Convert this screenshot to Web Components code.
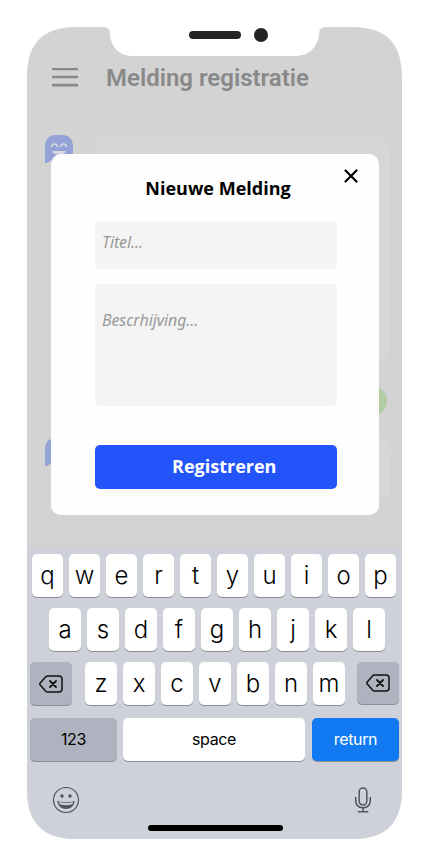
<!DOCTYPE html>
<html lang="nl">
<head>
<meta charset="utf-8">
<title>Melding registratie</title>
<style>
html,body{margin:0;background:#fff}
body{width:431px;height:864px;overflow:hidden;font-family:"Open Sans",sans-serif}
</style>
</head>
<body>
<phone-frame>
  <app-header>Melding registratie</app-header>
  <message-feed></message-feed>
  <melding-dialog slot="overlay" heading="Nieuwe Melding">
    <text-field>Titel...</text-field>
    <text-field multiline>Bescrhijving...</text-field>
    <submit-button>Registreren</submit-button>
  </melding-dialog>
  <touch-keyboard slot="keyboard"></touch-keyboard>
</phone-frame>
<script>
function define(name, html) {
  const template = document.createElement('template');
  template.innerHTML = html;
  customElements.define(name, class extends HTMLElement {
    constructor() {
      super();
      this.attachShadow({mode: 'open'}).append(template.content.cloneNode(true));
    }
    connectedCallback() {
      const h = this.shadowRoot.querySelector('[data-heading]');
      if (h) h.textContent = this.getAttribute('heading');
    }
  });
}

define('phone-frame', `<style>
:host{display:block;position:relative;padding:27px 29px 25px 27px;width:375px;height:812px}
.screen{position:relative;width:375px;height:812px;background:#d3d3d3;display:flex;flex-direction:column;
clip-path:path("M0 50C0 16 16 0 50 0H77Q83 0 83 7C84 20 92 29 106 29H268C282 29 291 20 292 7Q292 0 299 0H325C359 0 375 16 375 50V762C375 796 359 812 325 812H50C16 812 0 796 0 762Z")}
.content{height:519.500px}
.over{position:absolute;left:24px;top:127px}
.sensor{position:absolute;left:189px;top:28px;display:flex;align-items:center;gap:13px}
.sensor i{width:52px;height:8px;border-radius:4px;background:#232323}
.sensor b{width:14px;height:14px;border-radius:50%;background:#232323}
</style>
<div class="screen"><div class="content"><slot></slot></div><slot name="keyboard"></slot><div class="over"><slot name="overlay"></slot></div></div>
<div class="sensor"><i></i><b></b></div>`);

define('app-header', `<style>
:host{display:flex;align-items:center;gap:28px;box-sizing:border-box;height:108px;padding:0 0 7px 25px;color:#898989;font:600 24px/28px Roboto,sans-serif}
svg{display:block;flex:none}
</style><svg width="26" height="20" viewBox="0 0 26 20"><path d="M0 1.300H26M0 9.400H26M0 17.500H26" transform="translate(0 -.4)" stroke="#898989" stroke-width="2.600"/></svg><span><slot></slot></span>`);

define('ghost-avatar', `<style>:host{display:block;width:28px;height:28px}svg{display:block}</style>
<svg width="28" height="28" viewBox="0 0 28 28"><path d="M0 27V12C0 4 4 0 11 0H17C24 0 28 4 28 12V27L24 25L20 28L14 25L8 28L5.500 25.500L3 27.500Q0 29 0 27Z" fill="#94a2d8"/>
<g fill="none" stroke="#d5d7dd" stroke-width="1.600"><path d="M6.500 12C7 8 12 8 12.500 12M15.500 12C16 8 21 8 21.500 12"/></g><path d="M7 16H21C20 21 8 21 7 16Z" fill="#d5d7dd"/></svg>`);

define('message-feed', `<style>
:host{display:flex;flex-direction:column;padding:0 11px 0 18px}
.row{display:grid;grid-template-columns:28px 296px;column-gap:22px}
.card{border-radius:4px 16px 16px 4px;background:#d6d6d6;box-shadow:0 1px 2px #cfcfcf}
.big{height:228px}.small{height:71px}
.dot{align-self:flex-end;width:30px;height:30px;border-radius:50%;background:#b1cca5;margin:23px 4px 18px 0}
.second ghost-avatar{margin-top:4px}
</style><div class="row"><ghost-avatar></ghost-avatar><div class="card big"></div></div><div class="dot"></div><div class="row second"><ghost-avatar></ghost-avatar><div class="card small"></div></div>`);

define('melding-dialog', `<style>
:host{display:block;position:relative;box-sizing:border-box;width:328px;height:361px;padding:21px 42px 26px 44px;background:#fefefe;border-radius:10px}
h1{margin:0 0 20px;padding-left:4px;text-align:center;font:700 18px/26px "Open Sans",sans-serif;color:#000}
.fields{display:flex;flex-direction:column}
svg{position:absolute;left:292px;top:14px}
</style><h1 data-heading></h1><svg width="16" height="16" viewBox="0 0 16 16"><path d="M2.500 2.500L13.500 13.500M13.500 2.500L2.500 13.500" stroke="#000" stroke-width="2.200" stroke-linecap="round"/></svg><div class="fields"><slot></slot></div>`);

define('text-field', `<style>
:host{display:block;box-sizing:border-box;width:241.500px;height:48px;margin-bottom:15px;padding:10px 7px;background:#f4f4f4;border-radius:5px;color:#999;font:italic 400 16px/23px "Noto Sans","Open Sans",sans-serif;letter-spacing:-.12px}
:host([multiline]){height:122px;padding-top:25px;margin-bottom:39.300px}
</style><slot></slot>`);

define('submit-button', `<style>
:host{display:block;box-sizing:border-box;width:241.500px;height:43.700px;padding:8px 0 0 17px;background:#2354f9;border-radius:5px;color:#fff;text-align:center;font:700 18px/26px "Open Sans",sans-serif}
</style><slot></slot>`);

define('key-cap', `<style>
:host{display:flex;align-items:center;justify-content:center;box-sizing:border-box;width:32px;height:43px;padding-top:1px;border-radius:5px;background:#fff;box-shadow:0 1px 0 #8b8d91;color:#000;font:300 24px/28px Inter,sans-serif}
:host([narrow]){width:31px}
:host([shift]){width:42px}
:host([dark]){background:#afb3bf}
:host([wide]){width:87px;padding:0 0 1px;font-size:16px;font-weight:400;letter-spacing:-.35px}
:host([space]){width:182px}
:host([primary]){background:#117af3;color:#fff}
</style><slot></slot>`);

define('delete-icon', `<style>:host{display:block}svg{display:block}</style>
<svg width="24" height="18" viewBox="0 0 24 18"><g fill="none" stroke="#111" stroke-linecap="round" stroke-linejoin="round"><path d="M8.500 1H20Q23 1 23 4V14Q23 17 20 17H8.500Q7.500 17 6.800 16.200L1.200 9.900Q.4 9 1.200 8.100L6.800 1.800Q7.500 1 8.500 1Z" stroke-width="1.500"/><path d="M11 6L17 12M17 6L11 12" stroke-width="1.800"/></g></svg>`);

const keys = (s, a = '') => [...s].map(c => `<key-cap ${a}>${c}</key-cap>`).join('');
define('touch-keyboard', `<style>
:host{display:flex;flex-direction:column;box-sizing:border-box;width:375px;height:292.500px;padding-top:7.500px;background:#ced1d9}
.row{display:flex;gap:6px;height:43px;margin-bottom:11px}
.r1{padding-left:5px}.r2{padding-left:22px}.r3{padding-left:3px;margin-bottom:13px}.r4{padding-left:3px;margin-bottom:26px}
.r3 key-cap:first-child{margin-right:7px;padding-top:1px}
.r3 key-cap:last-child{margin-left:6px;height:42px;padding:0}
.r4 key-cap:last-child{margin-left:1px}
.tools{display:flex;justify-content:space-between;padding:0 30px 0 25px;height:28px}
.home{width:135px;height:6px;margin:10px 0 0 121px;border-radius:3px;background:#000}
svg{display:block}
</style>
<div class="row r1">${keys('qwertyuiop', 'narrow')}</div>
<div class="row r2">${keys('asdfghjkl')}</div>
<div class="row r3"><key-cap shift dark><delete-icon></delete-icon></key-cap>${keys('zxcvbnm')}<key-cap shift dark><delete-icon></delete-icon></key-cap></div>
<div class="row r4"><key-cap wide dark>123</key-cap><key-cap wide space>space</key-cap><key-cap wide primary>return</key-cap></div>
<div class="tools"><svg width="28" height="28" viewBox="0 0 28 28"><circle cx="14" cy="13" r="12.500" fill="none" stroke="#50545d" stroke-width="1.200"/><circle cx="10" cy="9" r="1.700" fill="#50545d"/><circle cx="18" cy="9" r="1.700" fill="#50545d"/><path d="M5.200 14Q14 16.500 22.800 14C22 19 18.500 22 14 22S6 19 5.200 14Z" fill="#50545d"/><path d="M6.800 15Q14 17 21.200 15L20.300 17.200Q14 19.400 7.700 17.200Z" fill="#ced1d9"/></svg>
<svg width="18" height="28" viewBox="0 0 18 28"><g fill="none" stroke="#50545d" stroke-width="1.500" stroke-linecap="round"><rect x="5.200" y="1" width="7.600" height="17" rx="3.800"/><path d="M1.700 10.500V13.500C1.700 18 4.500 20.700 9 20.700S16.300 18 16.300 13.500V10.500M9 21V24.500M4.300 24.700H13.700"/></g></svg></div>
<div class="home"></div>`);
</script>
</body>
</html>
